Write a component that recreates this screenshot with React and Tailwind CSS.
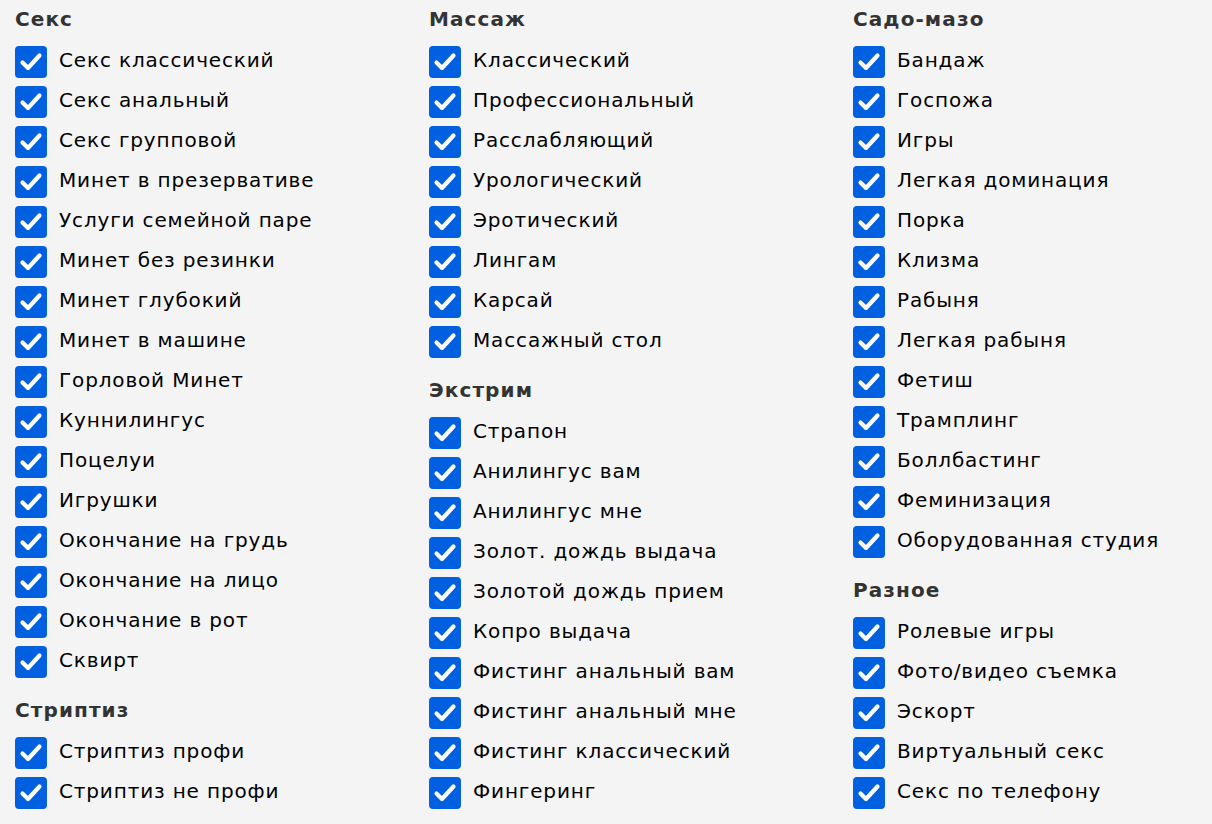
import React from "react";

const columns = [
  {
    w: "w-[414px]",
    sections: [
      {
        title: "Секс",
        items: [
          "Секс классический",
          "Секс анальный",
          "Секс групповой",
          "Минет в презервативе",
          "Услуги семейной паре",
          "Минет без резинки",
          "Минет глубокий",
          "Минет в машине",
          "Горловой Минет",
          "Куннилингус",
          "Поцелуи",
          "Игрушки",
          "Окончание на грудь",
          "Окончание на лицо",
          "Окончание в рот",
          "Сквирт",
        ],
      },
      { title: "Стриптиз", items: ["Стриптиз профи", "Стриптиз не профи"] },
    ],
  },
  {
    w: "w-[424px]",
    sections: [
      {
        title: "Массаж",
        items: [
          "Классический",
          "Профессиональный",
          "Расслабляющий",
          "Урологический",
          "Эротический",
          "Лингам",
          "Карсай",
          "Массажный стол",
        ],
      },
      {
        title: "Экстрим",
        items: [
          "Страпон",
          "Анилингус вам",
          "Анилингус мне",
          "Золот. дождь выдача",
          "Золотой дождь прием",
          "Копро выдача",
          "Фистинг анальный вам",
          "Фистинг анальный мне",
          "Фистинг классический",
          "Фингеринг",
        ],
      },
    ],
  },
  {
    w: "flex-1",
    sections: [
      {
        title: "Садо-мазо",
        items: [
          "Бандаж",
          "Госпожа",
          "Игры",
          "Легкая доминация",
          "Порка",
          "Клизма",
          "Рабыня",
          "Легкая рабыня",
          "Фетиш",
          "Трамплинг",
          "Боллбастинг",
          "Феминизация",
          "Оборудованная студия",
        ],
      },
      {
        title: "Разное",
        items: [
          "Ролевые игры",
          "Фото/видео съемка",
          "Эскорт",
          "Виртуальный секс",
          "Секс по телефону",
        ],
      },
    ],
  },
];

function Check() {
  return (
    <span className="w-8 h-8 rounded-[4px] bg-[#0060df] flex items-center justify-center shrink-0">
      <svg width="32" height="32" viewBox="0 0 32 32">
        <path
          d="M7.5 16.5 L13 22 L24.5 9.5"
          fill="none"
          stroke="white"
          strokeWidth="4.2"
          strokeLinecap="round"
          strokeLinejoin="round"
        />
      </svg>
    </span>
  );
}

export default function App() {
  return (
    <div
      className="w-[1212px] h-[824px] bg-[#f4f4f4] flex pl-[15px] pt-[7px] overflow-hidden"
      style={{ fontFamily: '"DejaVu Sans", Verdana, sans-serif' }}
    >
      {columns.map((col, ci) => (
        <div key={ci} className={`${col.w} flex flex-col gap-4`}>
          {col.sections.map((s) => (
            <div key={s.title} className="flex flex-col">
              <div className="h-6 leading-6 text-[20px] font-bold tracking-[1.1px] text-[#333333] mb-[11px]">
                {s.title}
              </div>
              {s.items.map((it) => (
                <label key={it} className="h-10 flex items-center gap-3">
                  <Check />
                  <span className="text-[20px] text-black leading-6 tracking-[0.85px] mb-[4px] whitespace-nowrap">
                    {it}
                  </span>
                </label>
              ))}
            </div>
          ))}
        </div>
      ))}
    </div>
  );
}
